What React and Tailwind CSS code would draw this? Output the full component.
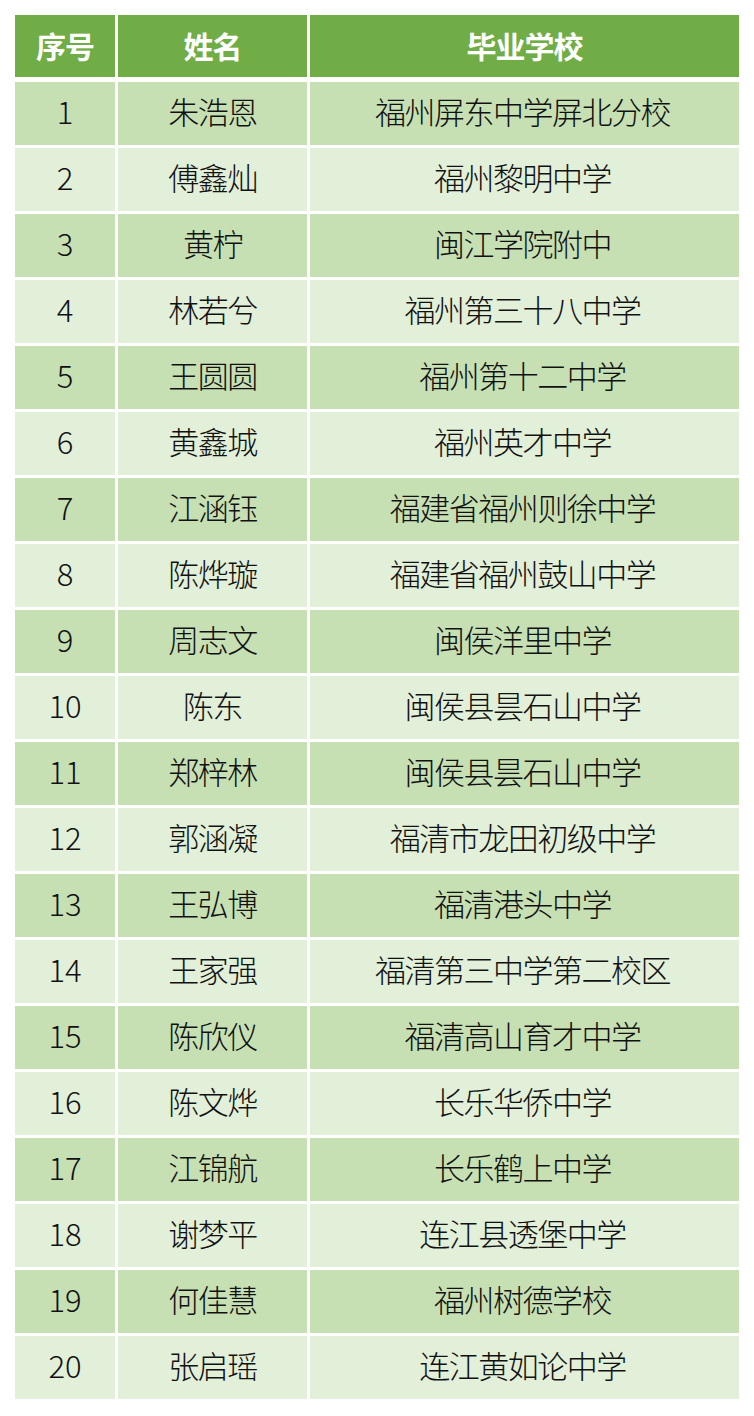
import React from 'react';

const rows = [
  ['1', '朱浩恩', '福州屏东中学屏北分校'],
  ['2', '傅鑫灿', '福州黎明中学'],
  ['3', '黄柠', '闽江学院附中'],
  ['4', '林若兮', '福州第三十八中学'],
  ['5', '王圆圆', '福州第十二中学'],
  ['6', '黄鑫城', '福州英才中学'],
  ['7', '江涵钰', '福建省福州则徐中学'],
  ['8', '陈烨璇', '福建省福州鼓山中学'],
  ['9', '周志文', '闽侯洋里中学'],
  ['10', '陈东', '闽侯县昙石山中学'],
  ['11', '郑梓林', '闽侯县昙石山中学'],
  ['12', '郭涵凝', '福清市龙田初级中学'],
  ['13', '王弘博', '福清港头中学'],
  ['14', '王家强', '福清第三中学第二校区'],
  ['15', '陈欣仪', '福清高山育才中学'],
  ['16', '陈文烨', '长乐华侨中学'],
  ['17', '江锦航', '长乐鹤上中学'],
  ['18', '谢梦平', '连江县透堡中学'],
  ['19', '何佳慧', '福州树德学校'],
  ['20', '张启瑶', '连江黄如论中学'],
];

const font = { fontFamily: '"Noto Sans CJK SC", "Noto Sans", sans-serif' };

export default function App() {
  return (
    <div className="min-h-[1416px] w-[754px] bg-white pt-[15px] pl-[15px]" style={font}>
      {/* header */}
      <div className="grid grid-cols-[100px_189px_429px] gap-[3px] mb-[5px]">
        {['序号', '姓名', '毕业学校'].map(h => (
          <div key={h} className="h-[62px] bg-[#70ad47] flex items-center justify-center pb-[2px] text-white font-bold text-[30px] tracking-[-1px]">
            {h}
          </div>
        ))}
      </div>

      {/* body */}
      <div className="grid grid-cols-[100px_189px_429px] gap-[3px]">
        {rows.map((r, i) => {
          const bg = i % 2 === 0 ? 'bg-[#c6e0b4]' : 'bg-[#e2efd9]';
          return (
            <React.Fragment key={r[0]}>
              <div className={`h-[63px] ${bg} flex items-center justify-center pb-[4px] font-light text-[31px] text-[#111]`}>{r[0]}</div>
              <div className={`h-[63px] ${bg} flex items-center justify-center pb-[4px] font-light text-[31px] tracking-[-1.5px] text-[#111]`}>{r[1]}</div>
              <div className={`h-[63px] ${bg} flex items-center justify-center pb-[4px] pr-[4px] font-light text-[31px] tracking-[-1.5px] text-[#111]`}>{r[2]}</div>
            </React.Fragment>
          );
        })}
      </div>
    </div>
  );
}
